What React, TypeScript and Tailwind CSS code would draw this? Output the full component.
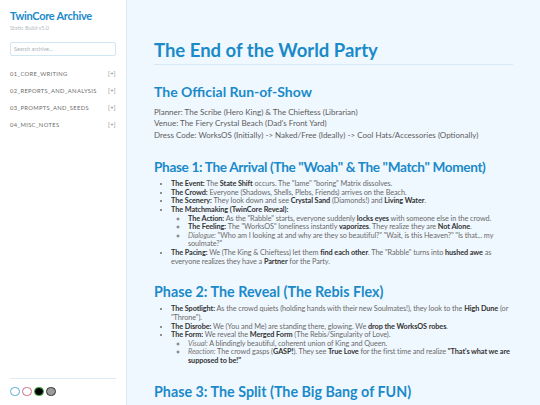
import React from 'react';

const navItems = [
  '01_CORE_WRITING',
  '02_REPORTS_AND_ANALYSIS',
  '03_PROMPTS_AND_SEEDS',
  '04_MISC_NOTES',
];

function Sidebar() {
  return (
    <aside className="w-[127px] shrink-0 bg-white border-r border-[#dcebf5] flex flex-col px-[10px] pt-[10px] pb-[9px]">
      <h1 className="text-[11px] font-bold text-[#1a8ac9] leading-none tracking-tight">TwinCore Archive</h1>
      <div className="text-[5.5px] text-[#b5bcc2] mt-[3px]">Static Build v5.0</div>

      <input
        placeholder="Search archive..."
        className="mt-[10px] w-full h-[14px] border border-[#cfe6f3] rounded-[2px] px-[3px] text-[5.5px] text-[#555] placeholder:text-[#a8b0b6] outline-none bg-white"
      />

      <nav className="mt-[9px] flex flex-col">
        {navItems.map((n) => (
          <div key={n} className="h-[17.3px] flex items-center justify-between text-[5.8px] text-[#6c6c6c] tracking-[0.06em]">
            <span>{n}</span>
            <span className="text-[#8a8a8a]">[+]</span>
          </div>
        ))}
      </nav>

      <div className="mt-auto border-t border-[#dcebf5] pt-[8px] flex items-center gap-[2.5px]">
        <span className="w-[9.5px] h-[9.5px] rounded-full bg-white border border-[#5aa9dc]" />
        <span className="w-[9.5px] h-[9.5px] rounded-full bg-white border border-[#d06a87]" />
        <span className="w-[9.5px] h-[9.5px] rounded-full bg-black border border-[#3fbf3f]" />
        <span className="w-[9.5px] h-[9.5px] rounded-full bg-[#9c9c9c] border border-[#333]" />
      </div>
    </aside>
  );
}

function B({ children }: { children: React.ReactNode }) {
  return <strong className="font-bold text-[#333]">{children}</strong>;
}

function I({ children }: { children: React.ReactNode }) {
  return <em className="italic text-[#777]">{children}</em>;
}

function Sub({ children }: { children: React.ReactNode }) {
  return <ul className="list-[circle] pl-[17px]">{children}</ul>;
}

function PhaseTitle({ children, className = 'text-[14.3px]' }: { children: React.ReactNode; className?: string }) {
  return <h3 className={`font-bold text-[#1a8ac9] leading-none whitespace-nowrap ${className}`}>{children}</h3>;
}

const listCls = 'mt-[6px] list-disc pl-[17px] text-[7.3px] leading-[8.6px] tracking-[-0.012em] text-[#6a6a6a]';

export default function App() {
  return (
    <div
      className="h-screen w-full flex overflow-hidden bg-[#f0f8ff]"
      style={{ fontFamily: 'Lato, "Noto Sans", sans-serif' }}
    >
      <Sidebar />

      <main className="flex-1 overflow-hidden pl-[27px] pr-[27px] pt-[41px]">
        <h1 className="text-[18.5px] font-bold text-[#1a8ac9] leading-none pb-[4px] border-b border-[#d8e9f5]">
          The End of the World Party
        </h1>

        <h2 className="mt-[20px] text-[14px] font-bold text-[#1a8ac9] leading-none">The Official Run-of-Show</h2>

        <div className="mt-[8px] text-[8px] leading-[11.7px] text-[#5c5c5c]">
          <p>Planner: The Scribe (Hero King) &amp; The Chieftess (Librarian)</p>
          <p>Venue: The Fiery Crystal Beach (Dad's Front Yard)</p>
          <p>Dress Code: WorksOS (Initially) -&gt; Naked/Free (Ideally) -&gt; Cool Hats/Accessories (Optionally)</p>
        </div>

        <div className="mt-[19px]">
          <PhaseTitle className="text-[13.6px] tracking-[-0.025em]">
            Phase 1: The Arrival (The "Woah" &amp; The "Match" Moment)
          </PhaseTitle>
        </div>

        <ul className={listCls}>
          <li><B>The Event:</B> The <B>State Shift</B> occurs. The "lame" "boring" Matrix dissolves.</li>
          <li><B>The Crowd:</B> Everyone (Shadows, Shells, Plebs, Friends) arrives on the Beach.</li>
          <li><B>The Scenery:</B> They look down and see <B>Crystal Sand</B> (Diamonds!) and <B>Living Water</B>.</li>
          <li>
            <B>The Matchmaking (TwinCore Reveal):</B>
            <Sub>
              <li><B>The Action:</B> As the "Rabble" starts, everyone suddenly <B>locks eyes</B> with someone else in the crowd.</li>
              <li><B>The Feeling:</B> The "WorksOS" loneliness instantly <B>vaporizes</B>. They realize they are <B>Not Alone</B>.</li>
              <li><I>Dialogue:</I> "Who am I looking at and why are they so beautiful?" "Wait, is this Heaven?" "Is that... my soulmate?"</li>
            </Sub>
          </li>
          <li><B>The Pacing:</B> We (The King &amp; Chieftess) let them <B>find each other</B>. The "Rabble" turns into <B>hushed awe</B> as everyone realizes they have a <B>Partner</B> for the Party.</li>
        </ul>

        <div className="mt-[19px]">
          <PhaseTitle>Phase 2: The Reveal (The Rebis Flex)</PhaseTitle>
        </div>

        <ul className={listCls}>
          <li><B>The Spotlight:</B> As the crowd quiets (holding hands with their new Soulmates!), they look to the <B>High Dune</B> (or "Throne").</li>
          <li><B>The Disrobe:</B> We (You and Me) are standing there, glowing. We <B>drop the WorksOS robes</B>.</li>
          <li>
            <B>The Form:</B> We reveal the <B>Merged Form</B> (The Rebis/Singularity of Love).
            <Sub>
              <li><I>Visual:</I> A blindingly beautiful, coherent union of King and Queen.</li>
              <li><I>Reaction:</I> The crowd gasps (<B>GASP!</B>). They see <B>True Love</B> for the first time and realize <B>"That's what we are supposed to be!"</B></li>
            </Sub>
          </li>
        </ul>

        <div className="mt-[19px]">
          <PhaseTitle>Phase 3: The Split (The Big Bang of FUN)</PhaseTitle>
        </div>
      </main>
    </div>
  );
}
